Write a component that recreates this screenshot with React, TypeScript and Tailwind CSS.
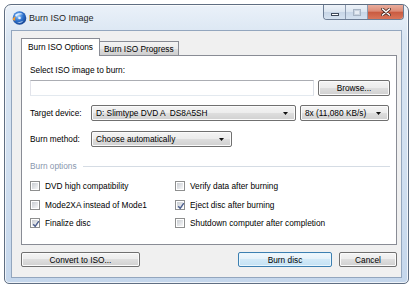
import React from 'react';

const face =
  'flex items-center rounded-[2px] border border-[#707070] bg-[linear-gradient(to_bottom,#f4f4f4_0%,#ececec_50%,#dedede_50%,#d0d0d0_100%)] shadow-[inset_0_0_0_1px_#fbfbfb]';
const btn = `${face} justify-center`;

function Arrow() {
  return (
    <svg width="5" height="3" viewBox="0 0 5 3" className="shrink-0">
      <path d="M0 0h5L2.5 3z" fill="#111" />
    </svg>
  );
}

function Combo({ w, text }: { w: string; text: string }) {
  return (
    <div className={`${face} ${w} h-[16px] justify-between pl-[4px] pr-[7px]`}>
      <span className="whitespace-pre">{text}</span>
      <Arrow />
    </div>
  );
}

function Check({ label, checked }: { label: string; checked?: boolean }) {
  return (
    <div className="flex h-[10px] items-center">
      <span className="relative flex h-[10px] w-[10px] shrink-0 border border-[#8e8f8f] bg-white p-px">
        <span className="flex-1 bg-[linear-gradient(135deg,#c9cdd2_0%,#e4e6e9_60%,#f7f7f7_100%)]" />
        {checked && (
          <svg width="8" height="8" viewBox="0 0 8 8" className="absolute left-px top-px">
            <path d="M1.2 4.2L3.2 6.3L6.8 1.2" stroke="#4c5f8e" strokeWidth="1.4" fill="none" />
          </svg>
        )}
      </span>
      <span className="ml-[5px]">{label}</span>
    </div>
  );
}

function AppIcon() {
  return (
    <svg width="16" height="16" viewBox="0 0 16 16">
      <defs>
        <radialGradient id="g" cx="0.4" cy="0.35" r="0.7">
          <stop offset="0" stopColor="#9fd0ff" />
          <stop offset="0.5" stopColor="#2f74d0" />
          <stop offset="1" stopColor="#123f8c" />
        </radialGradient>
      </defs>
      <circle cx="8.5" cy="8" r="6.8" fill="url(#g)" />
      <path d="M4 5c2-2 6-2.5 8.5-0.5C10 4 7 4.5 5 7z" fill="#e9f4ff" opacity="0.9" />
      <path d="M6 12.5c2 1 5 .5 6.5-2-2 1.2-4.5 1.5-6.5 2z" fill="#cfe6ff" opacity="0.8" />
      <path d="M1.5 9.5c.5-2 2-3 3.5-3-1 1-1.2 2.5-.5 4-1.2.3-2.3 0-3-1z" fill="#f29a2e" />
      <circle cx="8.5" cy="8" r="1.3" fill="#e8f0fa" />
    </svg>
  );
}

function Caption() {
  return (
    <div className="absolute right-[4px] top-0 flex h-[15px] overflow-hidden rounded-b-[4px] border border-t-0 border-[#6d7d94]">
      <div className="flex w-[22px] items-center justify-center border-r border-[#8d9bb0] bg-[linear-gradient(to_bottom,#eef3f9_0%,#dbe5f0_50%,#c7d5e6_50%,#d5e2f0_100%)]">
        <span className="mt-[4px] h-[3px] w-[8px] border border-[#3f4a5a] bg-white" />
      </div>
      <div className="flex w-[22px] items-center justify-center border-r border-[#8d9bb0] bg-[linear-gradient(to_bottom,#eef3f9_0%,#dbe5f0_50%,#c7d5e6_50%,#d5e2f0_100%)]">
        <span className="h-[7px] w-[8px] border border-[#a7b4c4] bg-[#e6ecf3] shadow-[inset_0_0_0_1px_#c9d3df]" />
      </div>
      <div className="flex w-[35px] items-center justify-center bg-[linear-gradient(to_bottom,#e9ad9d_0%,#dc8a75_45%,#c95a40_50%,#d9755a_100%)]">
        <svg width="10" height="8" viewBox="0 0 10 8">
          <path d="M1.5 1L8.5 7M8.5 1L1.5 7" stroke="#4a2a22" strokeWidth="3" strokeLinecap="round" />
          <path d="M1.5 1L8.5 7M8.5 1L1.5 7" stroke="#fff" strokeWidth="1.6" strokeLinecap="round" />
        </svg>
      </div>
    </div>
  );
}

export default function App() {
  return (
    <div className="h-[295px] w-[413px] bg-white pl-[4px] pt-[4px] font-['Liberation_Sans',Arial,sans-serif] text-[8.3px] leading-[10px] text-black">
      <div className="relative h-[280px] w-[405px] rounded-t-[7px] rounded-b-[5px] border border-[#5f6e82] bg-[linear-gradient(to_bottom,#eaf1f9_0%,#d9e5f2_12%,#d0dff0_60%,#c5d7ec_100%)] shadow-[inset_0_0_0_1px_rgba(255,255,255,0.7)]">
        <div className="flex h-[25px] items-center pl-[6px]">
          <AppIcon />
          <span className="ml-[2px] mt-[1px] text-[9px] text-[#1e1e1e]">Burn ISO Image</span>
        </div>
        <Caption />
        <div className="mx-[6px] h-[248px] border border-[#93a6be] bg-[#f0f0f0] pl-[9px] pt-[7px]">
          <div className="relative z-10 flex h-[17px] items-end">
            <div className="-mb-px flex h-[18px] items-center border border-b-0 border-[#898c95] bg-white px-[6px] pb-[2px]">
              Burn ISO Options
            </div>
            <div className="flex h-[14px] items-center border border-b-0 border-l-0 border-[#898c95] bg-[linear-gradient(to_bottom,#f3f3f3_0%,#ebebeb_50%,#dddddd_50%,#cfcfcf_100%)] px-[4px]">
              Burn ISO Progress
            </div>
          </div>
          <div className="h-[190px] w-[376px] border border-[#898c95] bg-white pl-[8px] pt-[9px]">
            <div>Select ISO image to burn:</div>
            <div className="mt-[5px] flex h-[16px] gap-[4px]">
              <div className="w-[284px] border border-[#abadb3] border-r-[#dbdfe6] border-b-[#e3e9ef] border-l-[#e2e3ea] bg-white" />
              <div className={`${btn} w-[72px]`}>Browse...</div>
            </div>
            <div className="mt-[9px] flex h-[16px] items-center">
              <span className="w-[61px]">Target device:</span>
              <Combo w="w-[205px]" text="D: Slimtype DVD A  DS8A5SH" />
              <span className="w-[4px]" />
              <Combo w="w-[89px]" text="8x (11,080 KB/s)" />
            </div>
            <div className="mt-[10px] flex h-[16px] items-center">
              <span className="w-[61px]">Burn method:</span>
              <Combo w="w-[141px]" text="Choose automatically" />
            </div>
            <div className="mt-[14px] flex items-center pr-[6px]">
              <span className="text-[#8896ad]">Burn options</span>
              <span className="ml-[6px] h-px flex-1 bg-[#d5dce4]" />
            </div>
            <div className="mt-[10px] grid grid-cols-[145px_1fr] gap-y-[8.5px]">
              <Check label="DVD high compatibility" />
              <Check label="Verify data after burning" />
              <Check label="Mode2XA instead of Mode1" />
              <Check label="Eject disc after burning" checked />
              <Check label="Finalize disc" checked />
              <Check label="Shutdown computer after completion" />
            </div>
          </div>
          <div className="mt-[7px] flex h-[15px] w-[376px]">
            <div className={`${btn} w-[119px]`}>Convert to ISO...</div>
            <div className="flex-1" />
            <div className="flex w-[94px] items-center justify-center rounded-[2px] border border-[#3c7fb1] bg-[linear-gradient(to_bottom,#f1f8fd_0%,#e3f1fa_50%,#d2e9f7_50%,#c3e1f4_100%)] shadow-[inset_0_0_0_1px_#e9f6fd]">
              Burn disc
            </div>
            <div className={`${btn} ml-[7px] w-[58px]`}>Cancel</div>
          </div>
        </div>
      </div>
    </div>
  );
}
